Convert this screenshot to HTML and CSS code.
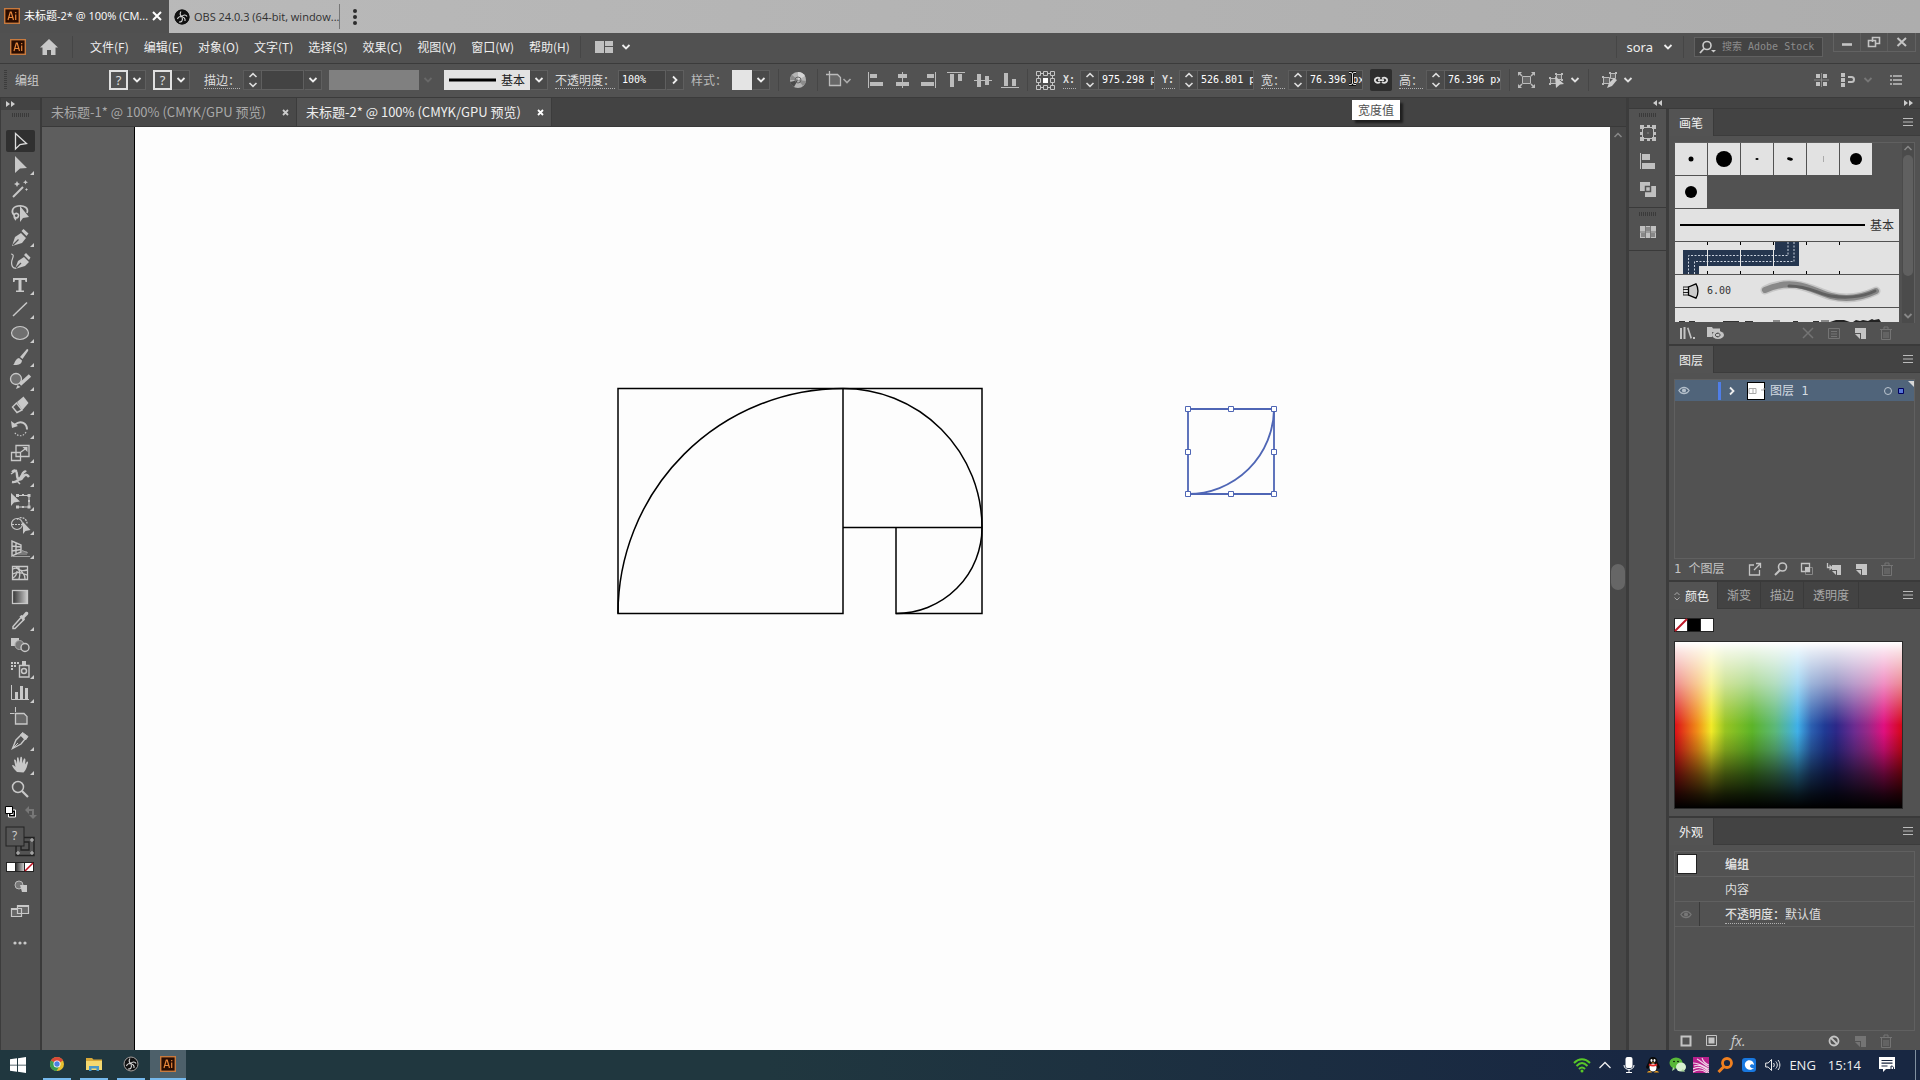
FILE: index.html
```html
<!DOCTYPE html>
<html lang="zh-CN">
<head>
<meta charset="utf-8">
<title>未标题-2* @ 100%</title>
<link rel="stylesheet" href="styles.css">
</head>
<body>
<svg class="defs" aria-hidden="true">
  <symbol id="chev" viewBox="0 0 10 8"><path d="M1.500 2l3.500 3.500L8.500 2" fill="none" stroke="currentColor" stroke-width="1.800"/></symbol>
  <symbol id="step" viewBox="0 0 10 16"><path d="M1.500 5L5 1.700 8.500 5M1.500 11L5 14.300 8.500 11" fill="none" stroke="currentColor" stroke-width="1.600"/></symbol>
  <symbol id="trash" viewBox="0 0 14 14"><path d="M1 3.500h12M5 3V1h4v2M2.500 4v9.500h9V4M5 6v6M7 6v6M9 6v6" fill="none" stroke="currentColor"/></symbol>
  <symbol id="new" viewBox="0 0 14 14"><path d="M2 2h11v11H8V7H2z" fill="currentColor"/><path d="M2 8h5v5z" fill="currentColor"/></symbol>
  <symbol id="menu" viewBox="0 0 12 10"><path d="M1 1.500h10M1 5h10M1 8.500h10" stroke="currentColor"/></symbol>
  <symbol id="ai" viewBox="0 0 16 16"><rect x=".7" y=".7" width="14.600" height="14.600" fill="#2a0c00" stroke="#c87a3e" stroke-width="1.400"/><path d="M4 12L6.300 4h.9l2.300 8M4.800 9.500h4M11.700 6.500V12M11.700 4v1.300" fill="none" stroke="#e8873a" stroke-width="1.200"/></symbol>
  <symbol id="obs" viewBox="0 0 16 16"><circle cx="8" cy="8" r="7.500" fill="#111"/><circle cx="8" cy="8" r="7" fill="none" stroke="currentColor"/><path d="M7 2.500c-1.500 2-1 4 1 5M13 7.500c-1-2-3.500-2-5-.2M5 13c2.500.3 4-1.500 3.200-4M8 8c-2-1-4 0-4.500 2M8 8c2 .2 3.500 1.500 3 4" fill="none" stroke="#ddd" stroke-width="1.100"/></symbol>
  <symbol id="eye" viewBox="0 0 14 10"><path d="M1 5c3-5 9-5 12 0-3 5-9 5-12 0z" fill="none" stroke="currentColor" stroke-width="1.400"/><circle cx="7" cy="5" r="2.400" fill="currentColor"/></symbol>
  <linearGradient id="gGrey"><stop offset="0" stop-color="#333"/><stop offset="1" stop-color="#ccc"/></linearGradient>
</svg>

<header class="windowtabs">
  <div class="wtab wtab-on"><svg width="16" height="16"><use href="#ai"/></svg><span class="wname">未标题-2* @ 100% (CM...</span><button class="x" aria-label="关闭"><svg width="10" height="10"><path d="M1 1l8 8M9 1L1 9" stroke="#fff" stroke-width="2"/></svg></button></div>
  <div class="wtab wtab-off"><svg width="16" height="16"><use href="#obs"/></svg><span class="wname">OBS 24.0.3 (64-bit, window...</span></div>
  <button class="dots" aria-label="更多"><svg width="6" height="18"><g fill="#2c2c2c"><circle cx="3" cy="3" r="2"/><circle cx="3" cy="9" r="2"/><circle cx="3" cy="15" r="2"/></g></svg></button>
</header>

<nav class="menubar">
  <svg width="16" height="16"><use href="#ai"/></svg>
  <button class="home" aria-label="主页"><svg width="18" height="16"><path d="M9 0l9 8.500h-2.500V16h-4.500v-5H7v5H2.500V8.500H0z" fill="#c8c8c8"/></svg></button>
  <i class="vr"></i>
  <div class="menus">
    <button>文件(F)</button><button>编辑(E)</button><button>对象(O)</button><button>文字(T)</button><button>选择(S)</button><button>效果(C)</button><button>视图(V)</button><button>窗口(W)</button><button>帮助(H)</button>
  </div>
  <i class="vr"></i>
  <button class="layoutbtn" aria-label="排列文档"><svg width="18" height="12"><path d="M0 0h9v12H0zM10 0h8v5h-8zM10 6h8v6h-8z" fill="#c0c0c0"/></svg><svg width="10" height="8"><use href="#chev"/></svg></button>
  <div class="menu-right">
    <i class="vr"></i>
    <button class="user">sora <svg width="10" height="8"><use href="#chev"/></svg></button>
    <i class="vr"></i>
    <label class="search"><svg width="18" height="14"><circle cx="8" cy="5.500" r="4" fill="none" stroke="#ccc" stroke-width="1.600"/><path d="M5 8.500L1 13" stroke="#ccc" stroke-width="1.800"/><path d="M12 10h5l-2.500 2.500z" fill="#ccc"/></svg><input type="text" placeholder="搜索 Adobe Stock" aria-label="搜索 Adobe Stock"></label>
    <div class="wincontrols">
      <button aria-label="最小化"><svg width="12" height="12"><path d="M1 8.500h10" stroke="#c4c4c4" stroke-width="2.600"/></svg></button><button aria-label="还原"><svg width="14" height="12"><path d="M5.500 6V1.500h7v6H9M1.500 4.500H8.500v6h-7z" fill="none" stroke="#c4c4c4" stroke-width="1.600"/></svg></button><button aria-label="关闭窗口"><svg width="12" height="12"><path d="M1.500 2l8.500 8M10 2l-8.500 8" stroke="#c4c4c4" stroke-width="2"/></svg></button>
    </div>
  </div>
</nav>

<section class="control">
  <i class="vgrip"></i>
  <span class="kind">编组</span>
  <div class="grp">
    <button class="q" aria-label="填色"><b>?</b><span class="drop"><svg width="10" height="8"><use href="#chev"/></svg></span></button>
    <button class="q" aria-label="描边颜色"><b>?</b><span class="drop"><svg width="10" height="8"><use href="#chev"/></svg></span></button>
  </div>
  <div class="grp">
    <label class="dotted" for="sw">描边：</label>
    <span class="combo"><button class="stepper" aria-label="微调"><svg width="10" height="16"><use href="#step"/></svg></button><input id="sw" class="w43" type="text"><button class="drop" aria-label="粗细"><svg width="10" height="8"><use href="#chev"/></svg></button></span>
    <span class="combo flat"><i class="greybox"></i><span class="drop dim"><svg width="10" height="8"><use href="#chev"/></svg></span></span>
    <button class="combo basic"><span><svg width="48" height="4"><path d="M0 2h47" stroke="#000" stroke-width="3"/></svg>基本</span><span class="drop"><svg width="10" height="8"><use href="#chev"/></svg></span></button>
    <label class="dotted" for="op">不透明度：</label>
    <span class="combo"><input id="op" class="w48" type="text" value="100%"><button class="drop" aria-label="不透明度滑块"><svg width="8" height="10"><path d="M2 1.500L5.500 5 2 8.500" fill="none" stroke="#eee" stroke-width="1.800"/></svg></button></span>
    <span class="plain">样式：</span>
    <button class="combo" aria-label="图形样式"><i class="style-sw"></i><span class="drop"><svg width="10" height="8"><use href="#chev"/></svg></span></button>
  </div>
  <i class="vr"></i>
  <button class="ic wide" aria-label="重新着色"><svg width="18" height="18"><circle cx="9" cy="9" r="8" fill="#b4b4b4"/><path d="M9 9L9 1a8 8 0 0 1 7 4z" fill="#d4d4d4"/><path d="M9 9l8 1a8 8 0 0 1-3 5z" fill="#8c8c8c"/><path d="M9 9l-8 2a8 8 0 0 0 4 5z" fill="#4a4a4a"/><path d="M9 9l-6-5a8 8 0 0 0-2 5z" fill="#8a8a8a"/><circle cx="9" cy="9" r="3" fill="none" stroke="#666"/></svg></button>
  <i class="vr"></i>
  <button class="ic" aria-label="画板"><svg width="26" height="18"><path d="M3.500 0v3M0 3.500h3M3.500 3.500h8l3 3v8h-11z" fill="#686868" stroke="#bbb" stroke-width="1.300"/><path d="M17.500 8l3.500 3.500L24.500 8" fill="none" stroke="#aaa" stroke-width="1.600"/></svg></button>
  <div class="grp aligns">
    <button class="ic" aria-label="左对齐"><svg width="18" height="18"><path d="M2.500 1v16" stroke="#bbb"/><path d="M4 3h7v4H4zM4 11h13v4H4z" fill="#bbb"/></svg></button>
    <button class="ic" aria-label="水平居中"><svg width="18" height="18"><path d="M9.500 1v16" stroke="#bbb"/><path d="M5 3h9v4H5zM3 11h13v4H3z" fill="#bbb"/></svg></button>
    <button class="ic" aria-label="右对齐"><svg width="18" height="18"><path d="M15.500 1v16" stroke="#bbb"/><path d="M7 3h7v4H7zM1 11h13v4H1z" fill="#bbb"/></svg></button>
    <button class="ic" aria-label="顶对齐"><svg width="18" height="18"><path d="M0 1.500h18" stroke="#bbb"/><path d="M3 3h4v13H3zM11 3h4v7h-4z" fill="#bbb"/></svg></button>
    <button class="ic" aria-label="垂直居中"><svg width="18" height="18"><path d="M0 9.500h18" stroke="#bbb"/><path d="M3 3h4v13H3zM11 5h4v9h-4z" fill="#bbb"/></svg></button>
    <button class="ic" aria-label="底对齐"><svg width="18" height="18"><path d="M0 16.500h18" stroke="#bbb"/><path d="M3 2h4v13H3zM11 8h4v7h-4z" fill="#bbb"/></svg></button>
  </div>
  <i class="vr"></i>
  <button class="ic" aria-label="参考点"><svg width="19" height="19"><g fill="none" stroke="#c4c4c4"><path d="M5 2.500h2M12 2.500h2M5 16.500h2M12 16.500h2M2.500 5v2M2.500 12v2M16.500 5v2M16.500 12v2"/><path d="M.5.5h4v4h-4zM7.500.5h4v4h-4zM14.500.5h4v4h-4zM.5 7.500h4v4h-4zM14.500 7.500h4v4h-4zM.5 14.500h4v4h-4zM7.500 14.500h4v4h-4zM14.500 14.500h4v4h-4z"/></g><path d="M7 7h5v5H7z" fill="#fff"/></svg></button>
  <div class="grp xy">
    <label class="dotted mono" for="fx">X:</label>
    <span class="combo"><button class="stepper" aria-label="X 微调"><svg width="10" height="16"><use href="#step"/></svg></button><input id="fx" class="w57" type="text" value="975.298 px"></span>
    <label class="dotted mono" for="fy">Y:</label>
    <span class="combo"><button class="stepper" aria-label="Y 微调"><svg width="10" height="16"><use href="#step"/></svg></button><input id="fy" class="w57" type="text" value="526.801 px"></span>
    <label class="dotted" for="fw">宽：</label>
    <span class="combo tiphost"><button class="stepper" aria-label="宽 微调"><svg width="10" height="16"><use href="#step"/></svg></button><input id="fw" class="w57" type="text" value="76.396 px"><svg class="ibeam" width="9" height="15"><path d="M1 1.500h2.500L4.500 3l1-1.500H8M4.500 3v9M1 13.500h2.500l1-1.500 1 1.500H8" fill="none" stroke="#111" stroke-width="3"/><path d="M1 1.500h2.500L4.500 3l1-1.500H8M4.500 3v9M1 13.500h2.500l1-1.500 1 1.500H8" fill="none" stroke="#ddd"/></svg><span class="tip" role="tooltip">宽度值</span></span>
    <button class="link" aria-label="约束宽度和高度比例"><svg width="16" height="10"><path d="M7 3.500a3 2.500 0 1 0 0 3.500M9 3.500a3 2.500 0 1 1 0 3.500M5 5.200h6" fill="none" stroke="#e0e0e0" stroke-width="1.800"/></svg></button>
    <label class="dotted" for="fh">高：</label>
    <span class="combo"><button class="stepper" aria-label="高 微调"><svg width="10" height="16"><use href="#step"/></svg></button><input id="fh" class="w57" type="text" value="76.396 px"></span>
  </div>
  <i class="vr"></i>
  <button class="ic" aria-label="隔离选中的组"><svg width="18" height="16"><path d="M4.500 4.500h8v7h-8z" fill="#686868" stroke="#bbb"/><path d="M1 1l3 3M16 1l-3 3M1 15l3-3M16 15l-3-3" stroke="#bbb" stroke-width="1.500"/><path d="M0 4V0h4zM17 4V0h-4zM0 12v4h4zM17 12v4h-4z" fill="#bbb"/></svg></button>
  <button class="ic icd" aria-label="选择类似对象"><svg width="18" height="18"><path d="M2.500 7.500h6v5h-6zM8.500 3.500h5v5h-5z" fill="#686868" stroke="#bbb"/><path d="M1 6h2v2H1zM1 12h2v2H1zM7 2h2v2H7zM13 2h2v2h-2zM13 8h2v2h-2z" fill="#bbb"/><path d="M7 5l9 8-4 .5L8 17z" fill="#ccc"/></svg><svg width="10" height="8"><use href="#chev"/></svg></button>
  <i class="vr"></i>
  <button class="ic icd" aria-label="编辑选中对象"><svg width="18" height="18"><path d="M2.500 6.500h6v6h-6zM9.500 2.500h5v5h-5z" fill="#686868" stroke="#bbb"/><path d="M1 5h2v2H1zM1 12h2v2H1zM8 1h2v2H8zM14 1h2v2h-2z" fill="#bbb"/><path d="M6 17l2-5 5-5 3 2-5 6z" fill="#ccc"/></svg><svg width="10" height="8"><use href="#chev"/></svg></button>
  <div class="control-right">
    <button class="ic" aria-label="对齐网格"><svg width="15" height="14"><path d="M2 1h4v4H2zM9 1h4v4H9zM2 9h4v4H2zM9 9h4v4H9z" fill="#c0c0c0"/><path d="M7.500 0v14M0 7h15" stroke="#888"/></svg></button>
    <button class="ic icd dimchev" aria-label="对齐像素"><svg width="16" height="14"><path d="M0 0h4v4H0zM0 5h4v4H0zM0 10h4v4H0z" fill="#c0c0c0"/><path d="M7 4h3.500a2.500 2.500 0 0 1 0 5H7" fill="none" stroke="#c0c0c0" stroke-width="2"/></svg><svg width="10" height="8"><use href="#chev"/></svg></button>
    <button class="ic" aria-label="控制栏菜单"><svg width="14" height="12"><path d="M1 2h2M1 6h2M1 10h2M4 2h9M4 6h9M4 10h9" stroke="#c0c0c0" stroke-width="1.500"/></svg></button>
  </div>
</section>

<main class="work">
  <aside class="tools">
    <button class="collapse" aria-label="展开"><svg width="9" height="6"><path d="M0 0l4 3-4 3zM5 0l4 3-4 3z" fill="#ccc"/></svg></button>
    <i class="grip"></i>
    <div class="toollist">
      <button class="on" aria-label="选择"><svg width="28" height="24"><path d="M7.500 4.500V20L12 15.500l6.500-1z" fill="none" stroke="#ddd" stroke-width="1.300"/></svg></button>
      <button class="f" aria-label="直接选择"><svg width="28" height="24"><path d="M7 3v17l5-4.500 7-.5z" fill="#c8c8c8"/></svg></button>
      <button aria-label="魔棒"><svg width="28" height="24"><path d="M5 20L15 10" stroke="#c8c8c8" stroke-width="2"/><path d="M9 4l1 2 2 1-2 1-1 2-1-2-2-1 2-1zM17.500 3l.8 1.500 1.700.7-1.700.7-.8 1.600-.8-1.600-1.700-.7 1.700-.7zM18.500 11l.6 1 1 .5-1 .5-.6 1-.6-1-1-.5 1-.5z" fill="#c8c8c8"/></svg></button>
      <button aria-label="套索"><svg width="28" height="24"><path d="M6 14c-3-3-2-8 4-9 6-1 11 2 9 7M6 14c2-3 6-1 4 2-1 1.500-4 1-4-2 0 3 .5 4 2 5" fill="none" stroke="#c8c8c8" stroke-width="1.700"/><path d="M12 5v16l3-4 6-1z" fill="#c8c8c8"/></svg></button>
      <button class="f" aria-label="钢笔"><svg width="28" height="24"><path d="M4 21L7 12l6-4 5 5-4 5zM13.500 6l2-2 5 4.500-2 2.500z" fill="#c8c8c8"/><path d="M5 20l5.500-5.500" stroke="#535353" stroke-width="1.200"/></svg></button>
      <button aria-label="曲率"><svg width="28" height="24"><path d="M3 5c4 0 1.500 4 .8 7-.8 4 1 8 4 7" fill="none" stroke="#c8c8c8" stroke-width="1.200"/><path d="M7 20l3-8 6-4 5 5-4 4zM16 6l2-2 4.500 4.500-1.500 2.500z" fill="#c8c8c8"/><path d="M8 19l5-5" stroke="#535353" stroke-width="1.200"/></svg></button>
      <button class="f" aria-label="文字"><svg width="28" height="24"><path d="M5 5h14v4h-1.500L17 7h-3.500v10.500H16V19H8v-1.500h2.500V7H7l-.5 2H5z" fill="#c8c8c8"/></svg></button>
      <button class="f" aria-label="直线段"><svg width="28" height="24"><path d="M5 19L19 5.500" stroke="#c8c8c8" stroke-width="1.500"/></svg></button>
      <button class="f" aria-label="椭圆"><svg width="28" height="24"><ellipse cx="12" cy="12" rx="8.500" ry="6.500" fill="#707070" stroke="#c8c8c8" stroke-width="1.200"/></svg></button>
      <button class="f" aria-label="画笔"><svg width="28" height="24"><path d="M12 12l7-8c1.500 0 1.500 1 1 2l-5.500 8zM11 13l3 2.500c-.5 4-4 5-9 4.500 2-1 1.500-6 6-7z" fill="#c8c8c8"/></svg></button>
      <button class="f" aria-label="Shaper"><svg width="28" height="24"><circle cx="8" cy="10" r="5.500" fill="#707070" stroke="#c8c8c8" stroke-width="1.300"/><path d="M12 15.500l10-9" stroke="#c8c8c8" stroke-width="3.500"/><path d="M8 20l1.500-4 3 2z" fill="#c8c8c8"/></svg></button>
      <button class="f" aria-label="橡皮擦"><svg width="28" height="24"><path d="M9 9l6.500-5.500L20.500 10l-6 7z" fill="#c8c8c8"/><path d="M8.500 10l-4 4 4.500 5.500 5-2.500z" fill="none" stroke="#c8c8c8" stroke-width="1.400"/></svg></button>
      <button class="f" aria-label="旋转"><svg width="28" height="24"><path d="M7 7.500c6-5 12-1 12 5" fill="none" stroke="#c8c8c8" stroke-width="2"/><path d="M3 4l1 7 6-2z" fill="#c8c8c8"/><path d="M18 15c-3 5-8 5-12 0" fill="none" stroke="#c8c8c8" stroke-width="1.200" stroke-dasharray="1.500 1.500"/></svg></button>
      <button class="f" aria-label="比例缩放"><svg width="28" height="24"><path d="M8 4.500h13v11H8zM3.500 11.500h9v8h-9z" fill="none" stroke="#c8c8c8" stroke-width="1.300"/><path d="M13 11l4-3" stroke="#c8c8c8" stroke-width="1.400"/><path d="M14.500 6h5v5z" fill="#c8c8c8"/></svg></button>
      <button class="f" aria-label="宽度"><svg width="28" height="24"><path d="M4 7c3-3 5-1 5 3 0 5 4 6 6 2 2-3 4-3 6 0M4 17c5 1 8-3 10-7 1-3 3-4 4-3" fill="none" stroke="#c8c8c8" stroke-width="2.400"/><path d="M3 9l6-4M8 15l4 4" stroke="#c8c8c8" stroke-width="1.500"/></svg></button>
      <button class="f" aria-label="自由变换"><svg width="28" height="24"><path d="M9.500 6.500h11.500v11.500h-12" fill="none" stroke="#c8c8c8" stroke-width="1.200"/><path d="M3 4v13l3-3.500 6-1zM8 5h3v3H8zM19.500 5h3v3h-3zM19.500 16.500h3v3h-3zM8 16.500h3v3H8zM14 5h2v2h-2zM14 17h2v2h-2zM20 11h2v2h-2z" fill="#c8c8c8"/></svg></button>
      <button class="f" aria-label="形状生成器"><svg width="28" height="24"><circle cx="9" cy="11" r="5.500" fill="none" stroke="#c8c8c8" stroke-width="1.200"/><path d="M9 6.500c4-4 10-1 10 4M4 11.500h11" fill="none" stroke="#c8c8c8" stroke-width="1.200" stroke-dasharray="2 1"/><path d="M15 9v12l2.500-3 5-1z" fill="#c8c8c8"/></svg></button>
      <button class="f" aria-label="透视网格"><svg width="28" height="24"><path d="M4 4v15l9-4V8zM4 9l9 1M4 14l9-1.500M8 6v11" fill="none" stroke="#c8c8c8" stroke-width="1.400"/><path d="M13 15h6M10 17h9M5 19.500h17M13 13l7 3" stroke="#a0a0a0"/></svg></button>
      <button aria-label="网格"><svg width="28" height="24"><path d="M4.500 5.500h15v13h-15zM5 8c6-3 8 3 6 10M11 6c-1 4 4 4 8 3M5 13c5-3 9-1 14 1M8 6c5 3 9 7 9 12M5 17c3-2 4-4 4-7" fill="none" stroke="#c8c8c8" stroke-width="1.300"/></svg></button>
      <button aria-label="渐变"><svg width="28" height="24"><rect x="4.500" y="5.500" width="15" height="13" fill="url(#gGrey)" stroke="#c8c8c8" stroke-width="1.300"/></svg></button>
      <button class="f" aria-label="吸管"><svg width="28" height="24"><path d="M13 8.500L5 17.500v2h2l8.500-8.500" fill="none" stroke="#c8c8c8" stroke-width="1.500"/><path d="M11.500 7.500l2-1.500 1 .5 3-3.500c2-1 3.500.5 2.500 2.500L16.500 9l.5 1.500-1.500 1.800z" fill="#c8c8c8"/></svg></button>
      <button aria-label="混合"><svg width="28" height="24"><path d="M3 5h8v8H3z" fill="#c8c8c8"/><circle cx="11.500" cy="12" r="4.500" fill="#777" stroke="#aaa"/><circle cx="17" cy="14.500" r="4" fill="#535353" stroke="#c8c8c8" stroke-width="1.400"/></svg></button>
      <button class="f" aria-label="符号喷枪"><svg width="28" height="24"><path d="M11.500 8.500h9.500v11.500h-9.500z" fill="none" stroke="#c8c8c8" stroke-width="1.400"/><path d="M14 4h4v4h-4zM3 5h2v2H3zM6 5h2v2H6zM9 5h2v2H9zM3 8h2v2H3zM6 8h2v2H6zM3 11h2v2H3z" fill="#c8c8c8"/><circle cx="16" cy="14" r="2.500" fill="none" stroke="#c8c8c8" stroke-width="1.500"/></svg></button>
      <button class="f" aria-label="柱形图"><svg width="28" height="24"><path d="M3.500 4v14.500H21" fill="none" stroke="#c8c8c8"/><path d="M7 11h3v7H7zM12 5h3v13h-3zM17 7h3v11h-3z" fill="#c8c8c8"/></svg></button>
      <button aria-label="画板工具"><svg width="28" height="24"><path d="M7.500 8.500h8.500l3 3V19H7.500z" fill="#686868" stroke="#c8c8c8" stroke-width="1.300"/><path d="M7.500 2v5M2 8.500h4.500" stroke="#c8c8c8"/></svg></button>
      <button class="f" aria-label="切片"><svg width="28" height="24"><path d="M4.500 19.500L8 11l5-5 4 4-4 5z" fill="none" stroke="#c8c8c8" stroke-width="1.400"/><path d="M12.500 6l2-2.500 5.500 4L17.500 11zM5 19l5-5z" fill="#c8c8c8" stroke="#c8c8c8"/></svg></button>
      <button class="f" aria-label="抓手"><svg width="28" height="24"><path d="M9 19c-2-2-4-4-5-6.500.5-1.200 2-.5 3.500 1.500L6 7c1-1 2-.5 3 4V5c1-1.300 2-1 2.200 5L12.500 4c1.500-.8 2 0 1.500 6.500l2-5c1.500-.5 1.800.5 1 6l2-3c1.300 0 1.200 1 .5 3-1 4-2 6-4 8z" fill="#c8c8c8"/></svg></button>
      <button aria-label="缩放"><svg width="28" height="24"><circle cx="10" cy="10" r="5.500" fill="none" stroke="#c8c8c8" stroke-width="1.500"/><path d="M14 14l6 6" stroke="#c8c8c8" stroke-width="2.200"/></svg></button>
    </div>
    <button class="block swap" aria-label="默认和互换"><svg width="34" height="24"><path d="M4.500 8h7v7h-7z" fill="#000" stroke="#fff"/><path d="M6.500 10h3v3h-3z" fill="#fff"/><path d="M1.500 4.500h7v7h-7z" fill="#fff" stroke="#000"/><path d="M24 8h5v7" fill="none" stroke="#777" stroke-width="2"/><path d="M25 4v8l-4-4zM25 13h8l-4 4z" fill="#777"/></svg></button>
    <button class="block fillstroke" aria-label="填色和描边"><svg width="34" height="32"><path d="M11 11.500h18v18h-18zM16 16h8v8h-8z" fill="#535353" stroke="#222" stroke-width="1.400"/><g fill="none" stroke="#ccc"><circle cx="27" cy="14" r="1.200"/><circle cx="27" cy="27" r="1.200"/><circle cx="13" cy="27" r="1.200"/></g><rect x="1" y="1" width="18" height="19" fill="#555" stroke="#222"/></svg><b>?</b></button>
    <button class="block modes" aria-label="颜色模式"><svg width="28" height="10"><rect width="28" height="10" fill="#222"/><path d="M1 1h8v8H1z" fill="#fff"/><path d="M10 1h8v8h-8z" fill="url(#gGrey)"/><path d="M19 1h8v8h-8z" fill="#fff"/><path d="M19 9l8-8" stroke="#c01020" stroke-width="1.600"/></svg></button>
    <button class="block" aria-label="绘图模式"><svg width="28" height="25"><circle cx="11" cy="11" r="4" fill="#777" stroke="#bbb"/><path d="M12 11h7v7h-5z" fill="#c8c8c8"/></svg></button>
    <button class="block" aria-label="屏幕模式"><svg width="28" height="24"><path d="M3.500 9.500h10v8h-10zM9.500 6.500h11v8h-11z" fill="#686868" stroke="#c8c8c8" stroke-width="1.200"/><path d="M3 9h6v2H3zM9 6h12v2H9z" fill="#c8c8c8"/></svg></button>
    <button class="block more" aria-label="编辑工具栏"><svg width="28" height="24"><g fill="#c8c8c8"><circle cx="7" cy="12" r="1.600"/><circle cx="12" cy="12" r="1.600"/><circle cx="17" cy="12" r="1.600"/></g></svg></button>
  </aside>

  <section class="doc">
    <div class="doctabs">
      <div class="dtab"><span>未标题-1* @ 100% (CMYK/GPU 预览)</span><button class="x" aria-label="关闭"><svg width="7" height="7"><path d="M1 1l5 5M6 1L1 6" stroke="#ccc" stroke-width="1.800"/></svg></button></div>
      <div class="dtab dtab-on"><span>未标题-2* @ 100% (CMYK/GPU 预览)</span><button class="x" aria-label="关闭"><svg width="7" height="7"><path d="M1 1l5 5M6 1L1 6" stroke="#fff" stroke-width="1.800"/></svg></button></div>
    </div>
    <div class="stage">
      <div class="artboard">
        <svg class="art" role="img" aria-label="黄金螺旋">
          <g fill="none" stroke="#000" stroke-width="1.500">
            <path d="M708 261.500H483v225h225zM708 261.500h139v225h-86v-86M708 400.500h139"/>
            <path d="M483 486.500a225 225 0 0 1 225-225a139 139 0 0 1 139 139a86 86 0 0 1-86 86"/>
          </g>
          <g fill="none" stroke="#4f66b5">
            <path d="M1053 282h86v85h-86z" stroke-width="1.800"/>
            <path d="M1139 282a86 86 0 0 1-86 85" stroke-width="1.800"/>
            <g fill="#fff" stroke-width="1">
              <path d="M1050.500 279.500h5v5h-5zM1093.500 279.500h5v5h-5zM1136.500 279.500h5v5h-5zM1050.500 322.500h5v5h-5zM1136.500 322.500h5v5h-5zM1050.500 364.500h5v5h-5zM1093.500 364.500h5v5h-5zM1136.500 364.500h5v5h-5z"/>
            </g>
          </g>
        </svg>
      </div>
      <div class="vscroll"><svg width="10" height="8"><path d="M1.500 6L5 2.500 8.500 6" fill="none" stroke="#888" stroke-width="1.500"/></svg><i class="thumb"></i></div>
    </div>
  </section>

  <aside class="right">
    <div class="righthead"><button aria-label="展开停靠栏"><svg width="9" height="6"><path d="M4 0L0 3l4 3zM9 0L5 3l4 3z" fill="#ccc"/></svg></button><button aria-label="折叠面板"><svg width="9" height="6"><path d="M0 0l4 3-4 3zM5 0l4 3-4 3z" fill="#ccc"/></svg></button></div>
    <div class="rightbody">
      <div class="dock">
        <div class="dockgrp">
          <i class="grip"></i>
          <button aria-label="变换"><svg width="18" height="18"><path d="M3.500 3.500h11v11h-11z" fill="none" stroke="#c0c0c0"/><path d="M1 1h4v4H1zM13 1h4v4h-4zM1 13h4v4H1zM13 13h4v4h-4zM8 1h3v3H8zM8 14h3v3H8zM1 8h3v3H1zM14 8h3v3h-3zM8.500 8.500h1v1h-1z" fill="#c0c0c0"/></svg></button>
          <button aria-label="对齐"><svg width="18" height="18"><path d="M1.500 1v16" stroke="#c0c0c0"/><path d="M3 2h8v6H3zM3 11h13v6H3z" fill="#c0c0c0"/></svg></button>
          <button aria-label="路径查找器"><svg width="18" height="18"><path d="M1 2h10v4h6v11H6v-6H1z" fill="#c0c0c0"/><path d="M6.500 6.500h5v5h-5z" fill="none" stroke="#535353" stroke-width="1.500"/></svg></button>
        </div>
        <div class="dockgrp">
          <i class="grip"></i>
          <button aria-label="色板"><svg width="18" height="14"><path d="M1 1h16v12H1z" fill="#c0c0c0"/><path d="M7 2h4v4H7zM2 8h4v4H2zM12 8h4v4h-4z" fill="#888"/><path d="M1 7h16M6.500 1v12M11.500 1v12" stroke="#777"/></svg></button>
        </div>
      </div>
      <div class="panels">
        <section class="panel">
          <header class="ptabs"><button class="ptab on">画笔</button><button class="pmenu" aria-label="面板菜单"><svg width="12" height="10"><use href="#menu"/></svg></button></header>
          <div class="pbox brushes">
            <div class="brushlist">
              <div class="cells">
                <i><svg width="32" height="32"><circle cx="16" cy="16" r="2.500"/></svg></i><i><svg width="32" height="32"><circle cx="16" cy="16" r="8"/></svg></i><i><svg width="32" height="32"><ellipse cx="16" cy="16" rx="1.600" ry="1"/></svg></i><i><svg width="32" height="32"><ellipse cx="16" cy="16" rx="3" ry="1.500" transform="rotate(12 16 16)"/></svg></i><i><svg width="32" height="32"><path d="M16.500 13v6" stroke="#aaa"/></svg></i><i><svg width="32" height="32"><circle cx="16" cy="16" r="6"/></svg></i><i><svg width="32" height="32"><circle cx="16" cy="16" r="6"/></svg></i>
              </div>
              <div class="brow basicrow"><svg width="185" height="4"><path d="M0 2h185" stroke="#000" stroke-width="2"/></svg>基本</div>
              <div class="brow"><svg width="224" height="32"><path d="M16 32V16h92V0" fill="none" stroke="#25364f" stroke-width="16"/><path d="M107 0h17v24H98V8h9z" fill="#25364f"/><path d="M13.500 32V13.500H113V0M19.500 32V19.500H119V0" fill="none" stroke="#c9d0dc" stroke-dasharray="2 1.500"/><path d="M32.500 7v18M65.500 7v18M98.500 7v18" stroke="#e8e8e8"/><path d="M32.500 0v3M65.500 0v3M98.500 0v3M131.500 0v3M164.500 0v3M32.500 29v3M65.500 29v3M98.500 29v3M131.500 29v3M164.500 29v3" stroke="#000"/></svg></div>
              <div class="brow sizerow"><svg width="16" height="16"><path d="M0 4h6M0 4v8h6M0 6.500h5M0 9.500h5" fill="none" stroke="#222"/><path d="M5.500 4L13 .8c2.600 4 2.600 10.400 0 14.400L5.500 12z" fill="#ccc" stroke="#000" stroke-width="1.300"/></svg><span>6.00</span><svg width="124" height="26"><g fill="none" stroke-linecap="round"><path d="M6 12c30-14 50 2 66 6s30 2 45-5" stroke="#aaa" stroke-width="9" opacity=".5"/><path d="M6 12c30-14 50 2 66 6s30 2 45-5" stroke="#888" stroke-width="6"/><path d="M30 8c20 0 30 8 42 10s30 2 44-5" stroke="#606060" stroke-width="3"/></g></svg></div>
              <div class="brow cut"><svg width="224" height="14"><path d="M4 13.500h6M14 13.500h6M48 13.500h16M70 13.500h8M98 13h7M118 13.500h5M138 13.500h6M146 13h8" stroke="#333"/><path d="M155 14l6-2h8l6 2zM178 14l3-2 4 1 3-1 5 1 4-2 2 1 5-1 2 3z" fill="#222"/></svg></div>
            </div>
            <div class="pscroll"><svg width="10" height="8"><path d="M1.500 6L5 2.500 8.500 6" fill="none" stroke="#888" stroke-width="1.500"/></svg><i></i><svg width="10" height="8"><use href="#chev"/></svg></div>
          </div>
          <footer class="pfoot icons"><button aria-label="画笔库菜单"><svg width="16" height="14"><path d="M1 2h2v11H1zM4.500 1h2v12h-2zM8 2l1.500-.5L13 12l-1.500.8z" fill="#c4c4c4"/><path d="M14 11h2v2h-2z" fill="#c4c4c4"/></svg></button><button aria-label="库面板"><svg width="18" height="14"><path d="M0 1h5l1 1.500h7V6H5v5H0z" fill="#c4c4c4"/><ellipse cx="11" cy="9" rx="6" ry="4" fill="#c4c4c4"/><path d="M11.500 7.500a2 1.800 0 1 0 0 3M10 7.500a2 1.800 0 1 1 0 3" stroke="#535353" fill="none"/></svg></button><span class="sp"></span><button class="off" aria-label="移去描边"><svg width="14" height="14"><path d="M2 2l10 10M12 2L2 12" stroke="currentColor" stroke-width="1.500"/></svg></button><button class="off" aria-label="选项"><svg width="14" height="14"><path d="M1.500 2.500h11v10h-11zM4 5.500h6M4 8h6M4 10.500h6" fill="none" stroke="currentColor"/></svg></button><button aria-label="新建画笔"><svg width="14" height="14"><use href="#new"/></svg></button><button class="off" aria-label="删除画笔"><svg width="14" height="14"><use href="#trash"/></svg></button></footer>
        </section>

        <section class="panel">
          <header class="ptabs"><button class="ptab on">图层</button><button class="pmenu" aria-label="面板菜单"><svg width="12" height="10"><use href="#menu"/></svg></button></header>
          <div class="pbox">
            <div class="layer"><svg class="leye" width="12" height="9"><use href="#eye"/></svg><i class="lcolor"></i><svg width="8" height="10"><path d="M2 1.500L5.500 5 2 8.500" fill="none" stroke="#eee" stroke-width="1.800"/></svg><svg width="18" height="18"><rect x=".5" y=".5" width="17" height="17" fill="#fff" stroke="#000"/><path d="M2 6.500h7v5H2zM6 6v5M14 8h3v-2" fill="none" stroke="#aaa"/></svg><span class="mono">图层 1</span><svg class="ltarget" width="32" height="20"><circle cx="6" cy="10" r="3.500" fill="none" stroke="#bcc6d0"/><path d="M16.500 7.500h5v5h-5z" fill="#5878d8" stroke="#000060"/><path d="M26 0h6v6z" fill="#d8d8d8"/></svg></div>
          </div>
          <footer class="pfoot"><span class="mono">1 个图层</span><span class="sp"></span><button aria-label="导出"><svg width="14" height="14"><path d="M6 3H1.500v10h10V8M6 8l6-6M8 1.500h4.500V6" fill="none" stroke="#c4c4c4" stroke-width="1.300"/></svg></button><button aria-label="定位对象"><svg width="14" height="14"><circle cx="8.500" cy="5" r="4" fill="none" stroke="#c4c4c4" stroke-width="1.600"/><path d="M6 8l-5 5" stroke="#c4c4c4" stroke-width="2"/></svg></button><button aria-label="剪切蒙版"><svg width="14" height="14"><path d="M5.500 5.500h7v7h-7z" fill="none" stroke="#888"/><path d="M1.500 1.500h8v8h-8z" fill="none" stroke="#c4c4c4" stroke-width="1.300"/><path d="M5 5h5v5H5z" fill="#c4c4c4"/></svg></button><button aria-label="新建子图层"><svg width="16" height="14"><path d="M6 3h9v10h-4V8H6z" fill="#c4c4c4"/><path d="M1.500 1v4.500H5" fill="none" stroke="#c4c4c4" stroke-width="1.300"/><path d="M3.500 2.500L7 5.500 3.500 8.500zM6 9h4v4z" fill="#c4c4c4"/></svg></button><button aria-label="新建图层"><svg width="14" height="14"><use href="#new"/></svg></button><button class="off" aria-label="删除图层"><svg width="14" height="14"><use href="#trash"/></svg></button></footer>
        </section>

        <section class="panel">
          <header class="ptabs multi"><button class="ptab on"><svg width="6" height="10"><path d="M.5 4L3 1.500 5.500 4M.5 6.500L3 9 5.500 6.500" fill="none" stroke="#aaa"/></svg>颜色</button><button class="ptab">渐变</button><button class="ptab">描边</button><button class="ptab">透明度</button><button class="pmenu" aria-label="面板菜单"><svg width="12" height="10"><use href="#menu"/></svg></button></header>
          <div class="colorbody">
            <svg width="40" height="14"><rect width="40" height="14" fill="#222"/><path d="M1 1h12v12H1zM27 1h12v12H27z" fill="#fff"/><path d="M14 1h12v12H14z" fill="#000"/><path d="M1 13L13 1" stroke="#c01828" stroke-width="2"/></svg>
            <div class="spectrum"></div>
          </div>
        </section>

        <section class="panel last">
          <header class="ptabs"><button class="ptab on">外观</button><button class="pmenu" aria-label="面板菜单"><svg width="12" height="10"><use href="#menu"/></svg></button></header>
          <div class="pbox">
            <ul class="appear">
              <li><span class="acol"><i class="asw"></i></span><b>编组</b></li>
              <li><span class="acol"></span>内容</li>
              <li><span class="acol aeye"><svg width="12" height="9"><use href="#eye"/></svg></span><a href="#" class="dotted">不透明度：</a>默认值</li>
            </ul>
          </div>
          <footer class="pfoot icons"><button aria-label="添加描边"><svg width="14" height="14"><path d="M2.500 2.500h9v9h-9z" fill="none" stroke="#c4c4c4" stroke-width="2"/></svg></button><button aria-label="添加填色"><svg width="14" height="14"><path d="M1.500 1.500h10v10h-10z" fill="none" stroke="#c4c4c4"/><path d="M3.500 3.500h6v6h-6z" fill="#c4c4c4"/></svg></button><button class="fx" aria-label="添加效果"><em>fx.</em></button><span class="sp"></span><button aria-label="清除外观"><svg width="14" height="14"><circle cx="7" cy="7" r="4.500" fill="none" stroke="#c4c4c4" stroke-width="1.800"/><path d="M4 4l6 6" stroke="#c4c4c4" stroke-width="1.800"/></svg></button><button class="off" aria-label="复制"><svg width="14" height="14"><use href="#new"/></svg></button><button class="off" aria-label="删除"><svg width="14" height="14"><use href="#trash"/></svg></button></footer>
        </section>
      </div>
    </div>
  </aside>
</main>

<footer class="taskbar">
  <button class="start" aria-label="开始"><svg width="16" height="16"><path d="M0 2.300l7-1v6.400H0zM8 1.200L16 0v7.700H8zM0 8.500h7v6.300l-7-1zM8 8.500h8V16l-8-1.200z" fill="#fff"/></svg></button>
  <button class="app" aria-label="Chrome"><svg width="16" height="16"><circle cx="8" cy="8" r="7" fill="#e8c030"/><path d="M8 8L1.900 4.500A7 7 0 0 1 14.100 4.500z" fill="#d84838"/><path d="M8 8L1.900 4.500A7 7 0 0 0 7.500 15l3-5z" fill="#3a9c50"/><circle cx="8" cy="8" r="3.500" fill="#fff"/><circle cx="8" cy="8" r="2.700" fill="#4a80e0"/></svg></button>
  <button class="app" aria-label="文件资源管理器"><svg width="16" height="16"><path d="M0 2h6l1.500 1.500H16V14H0z" fill="#d8a838"/><path d="M0 5h16v9H0z" fill="#f4d870"/><path d="M3 15v-5h10v5h-2.500v-2.500h-5V15z" fill="#4a98c8"/></svg></button>
  <button class="app obsapp" aria-label="OBS"><svg width="16" height="16"><use href="#obs"/></svg></button>
  <button class="app cur" aria-label="Illustrator"><svg width="16" height="16"><use href="#ai"/></svg></button>
  <div class="tray">
    <button aria-label="网络"><svg width="18" height="16"><g fill="none" stroke="#58c828" stroke-width="2"><path d="M1 6c5-5 11-5 16 0M3.500 9c4-4 7-4 11 0M6 12c2-2 4-2 6 0"/></g><circle cx="9" cy="14" r="1.500" fill="#58c828"/></svg></button>
    <button aria-label="显示隐藏的图标"><svg width="14" height="10"><path d="M1.500 8L7 2.500 12.500 8" fill="none" stroke="#eee" stroke-width="1.300"/></svg></button>
    <button aria-label="麦克风"><svg width="12" height="16"><rect x="2.500" y="0" width="7" height="11" rx="2" fill="#fff"/><path d="M1 8c0 6 10 6 10 0M6 13v2.500M3 15.500h6" fill="none" stroke="#fff"/></svg></button>
    <button aria-label="QQ"><svg width="16" height="16"><path d="M8 0c3 0 4.500 2 4.500 5L15 10l-1 2-1.500-1c0 2-2 4-4.500 4s-4.500-2-4.500-4L2 12l-1-2 2.500-5C3.500 2 5 0 8 0z" fill="#0a0a0a"/><ellipse cx="8" cy="10.500" rx="3.500" ry="4" fill="#fff"/><path d="M4 6.500c3 1.500 5 1.500 8 0l.3 2c-3 1.300-5.500 1.300-8.600 0z" fill="#e02828"/><ellipse cx="6.500" cy="3.500" rx="1" ry="1.400" fill="#fff"/><ellipse cx="9.500" cy="3.500" rx="1" ry="1.400" fill="#fff"/><path d="M2 15.500c1-2 4-2 5 0zM9 15.500c1-2 4-2 5 0zM6 5.500h4L8 6.500z" fill="#f0a020"/></svg></button>
    <button aria-label="微信"><svg width="18" height="16"><ellipse cx="7" cy="6" rx="6.500" ry="5.500" fill="#58b838"/><ellipse cx="12" cy="10" rx="5" ry="4.500" fill="#d8f0d0"/><path d="M3 14l1-4 2 2zM14 12l2 3-4-1z" fill="#a8d898"/><circle cx="5" cy="4.500" r=".8"/><circle cx="9" cy="4.500" r=".8"/></svg></button>
    <button aria-label="应用"><svg width="16" height="16"><rect width="16" height="16" fill="#b8208c"/><path d="M0 12C5 9 9 10 16 16M1 9c5-2 9 0 15 5M0 6c6 0 9 3 16 6M4 2c4 2 6 5 12 8M9 1c1 3 4 6 7 7M0 15c5-3 9-3 14 1" fill="none" stroke="#f0d8ea" stroke-width="1.100"/></svg></button>
    <button aria-label="查找"><svg width="16" height="16"><circle cx="10" cy="6" r="4.500" fill="none" stroke="#f08020" stroke-width="2.800"/><path d="M7 9.500L1.500 15" stroke="#f08020" stroke-width="3"/></svg></button>
    <button aria-label="卫士"><svg width="16" height="16"><rect x="1" y="1" width="14" height="14" rx="3" fill="#1878e0"/><path d="M11 4c-4-2-8 1-7 5 1 4 6 5 9 2-2 .5-4-.5-4-2 0-2 3-2 4-1 0-2-1-3-2-4z" fill="#fff"/></svg></button>
    <button aria-label="音量"><svg width="16" height="14"><path d="M.7 5h2.500L6.500 1.500v11L3.200 9H.7z" fill="none" stroke="#eee"/><path d="M8.500 5c1 1.500 1 2.500 0 4M10.800 3.500c2 2.500 2 4.500 0 7M13 2c2.500 3 2.500 7 0 10" fill="none" stroke="#eee"/></svg></button>
    <span class="ime">ENG</span>
    <time>15:14</time>
    <button class="notice" aria-label="通知"><svg width="16" height="16"><path d="M0 0h16v12H7l-3 3v-3H0z" fill="#fff"/><path d="M2.500 3.500h11M2.500 6.200h11M2.500 9h6" stroke="#1a2740" stroke-width="1.200"/><path d="M12 14V9c2 0 3 1 2.500 3" fill="none" stroke="#1a2740"/></svg></button>
  </div>
</footer>
</body>
</html>
```
FILE: styles.css
```css
* { box-sizing: border-box; }
html, body { height: 100%; }
body {
  margin: 0;
  display: flex;
  flex-direction: column;
  height: 100vh;
  overflow: hidden;
  background: #535353;
  color: #e4e4e4;
  font: 12px/16px "Noto Sans CJK SC", "Noto Sans", sans-serif;
}
button, input {
  font: inherit;
  color: inherit;
  background: none;
  border: 0;
  padding: 0;
  margin: 0;
}
svg { display: block; flex: none; }
.defs { width: 0; height: 0; position: absolute; }
i { display: block; flex: none; font-style: normal; }
.mono { font-family: "DejaVu Sans Mono", "Noto Sans CJK SC", monospace; white-space: nowrap; }
.vr { width: 1px; height: 22px; background: #464646; }

/* window tabs */
.windowtabs { flex: none; display: flex; height: 33px; background: linear-gradient(90deg, #bababa, #adadad); }
.wtab { display: flex; align-items: center; gap: 4px; font-family: "Open Sans", "Noto Sans CJK SC", sans-serif; font-size: 11px; white-space: nowrap; }
.wtab-on { width: 169px; padding: 0 8px 2px 4px; background: #505050; color: #fff; }
.wtab-on .x { margin-left: auto; }
.wtab-off { width: 171px; height: 25px; margin-top: 4px; padding-left: 5px; border-right: 1px solid #777; color: #303030; }
.wtab-off svg { color: #111; }
.dots { width: 30px; padding-left: 12px; }

/* menu bar */
.menubar { flex: none; display: flex; align-items: center; gap: 14px; height: 30px; padding: 0 4px 2px 10px; background: #515151; color: #eee; }
.menus { display: flex; gap: 15px; padding-left: 3px; margin-right: -4px; }
.menus button { white-space: nowrap; }
.layoutbtn { display: flex; align-items: center; gap: 8px; }
.menu-right { margin-left: auto; display: flex; align-items: center; gap: 10px; height: 100%; }
.user { display: flex; align-items: center; gap: 10px; font: 13px/16px "Noto Sans", sans-serif; }
.search { display: flex; align-items: center; gap: 5px; width: 129px; height: 20px; padding-left: 4px; background: #434343; border: 1px solid #606060; }
.search input { width: 98px; font: 10px/14px "DejaVu Sans Mono", "Noto Sans CJK SC", monospace; }
.search input::placeholder { color: #8c8c8c; opacity: 1; }
.wincontrols { display: flex; align-self: flex-start; border: 1px solid #626262; border-top: 0; }
.wincontrols button { width: 27px; height: 18px; display: grid; place-items: center; border-right: 1px solid #5e5e5e; }
.wincontrols button:last-child { border-right: 0; }

/* control bar */
.control { flex: none; display: flex; align-items: center; gap: 8px; height: 35px; padding: 0 17px 1px 4px; border-top: 1px solid #3b3b3b; border-bottom: 1px solid #3b3b3b; background: #525252; }
.vgrip { width: 3px; height: 20px; background: repeating-linear-gradient(#3c3c3c 0 1px, transparent 1px 2px); }
.kind { width: 86px; color: #ccc; }
.grp { display: flex; align-items: center; gap: 7px; }
.grp + .grp { margin-left: 6px; }
.q { display: flex; height: 20px; }
.q b { width: 19px; height: 20px; border: 2px solid #e0e0e0; font: 13px/16px "Noto Sans", sans-serif; text-align: center; color: #ddd; }
.drop { display: grid; place-items: center; width: 18px; height: 100%; border: 1px solid #5f5f5f; border-left: 1px solid #484848; background: #4a4a4a; color: #eee; }
.dim { color: #686868; border: 0; background: none; }
.dotted { height: 17px; margin-right: -4px; border-bottom: 1px dotted #b0b0b0; color: #ddd; white-space: nowrap; }
.control .dotted { max-width: 60px; }
.control label.mono { width: 13px; margin-right: -3px; font-weight: bold; font-size: 10px; }
.plain { width: 34px; color: #bbb; white-space: nowrap; }
.combo { display: flex; height: 20px; }
.combo input { height: 20px; padding: 0 0 2px 3px; background: #434343; border: 1px solid #5f5f5f; color: #fff; font: 10px/14px "DejaVu Sans Mono", monospace; }
.stepper { display: grid; place-items: center; width: 18px; height: 20px; background: #4a4a4a; border: 1px solid #5c5c5c; border-right: 0; color: #ddd; }
.w43 { width: 43px; }
.w48 { width: 48px; }
.w57 { width: 57px; }
.greybox { width: 90px; height: 20px; background: #808080; }
.basic > span:first-child { display: flex; align-items: center; justify-content: space-between; width: 86px; height: 20px; padding: 0 5px; background: #e2e2e2; color: #222; }
.style-sw { width: 20px; height: 20px; background: #e4e4e4; }
.ic { display: grid; place-items: center; }
.wide { width: 22px; }
.aligns { gap: 9px; margin-left: 6px; }
.tiphost { position: relative; }
.ibeam { position: absolute; left: 60px; top: 1px; }
.tip { position: absolute; left: 64px; top: 30px; z-index: 5; padding: 2px 6px; background: #fff; color: #505050; white-space: nowrap; box-shadow: 3px 3px 2px #0008; }
.link { display: grid; place-items: center; width: 22px; height: 22px; background: #2e2e2e; border-radius: 2px; }
.icd { display: flex; align-items: center; gap: 4px; margin-left: 4px; color: #e0e0e0; }
.control-right { margin-left: auto; display: flex; align-items: center; gap: 12px; }
.control-right .dimchev { gap: 6px; margin-left: 0; color: #777; }
.control-right .ic:last-child { margin-left: 4px; }

/* work area */
.work { flex: 1; display: flex; min-height: 0; }
.tools { flex: none; width: 42px; background: #525252; border-left: 1px solid #3c3c3c; border-right: 2px solid #3a3a3a; }
.collapse { display: flex; align-items: center; width: 100%; height: 12px; padding-left: 5px; background: #434343; }
.grip { width: 18px; height: 4px; margin: 3px auto 12px; background: repeating-linear-gradient(90deg, #3a3a3a 0 1px, transparent 1px 2px); }
.toollist { display: flex; flex-direction: column; }
.toollist button { position: relative; height: 24px; padding-left: 7px; }
.toollist .on { margin: 1px 5px; height: 22px; padding-left: 2px; background: #303030; border-radius: 2px; }
.on svg { margin: -1px 0; }
.toollist .f::after { content: ""; position: absolute; left: 29px; top: 18px; border: 2px solid; border-color: transparent #ccc #ccc transparent; }
.block { display: block; padding-left: 7px; }
.swap { padding: 1px 0 0 3px; }
.fillstroke { position: relative; padding: 0 0 0 4px; }
.fillstroke b { position: absolute; left: 11px; top: 2px; font: 12px/16px "Noto Sans", sans-serif; color: #ccc; }
.modes { padding: 4px 0 2px 5px; }
.more { padding-top: 8px; }

.doc { flex: 1; min-width: 0; display: flex; flex-direction: column; }
.doctabs { flex: none; display: flex; height: 29px; background: #434343; border-bottom: 1px solid #393939; }
.dtab { display: flex; align-items: center; justify-content: space-between; width: 255px; padding: 0 7px 0 9px; font-size: 13px; color: #a8a8a8; background: #494949; white-space: nowrap; border-right: 1px solid #3c3c3c; }
.dtab-on { background: #535353; color: #eee; }
.stage { flex: 1; display: flex; padding-left: 92px; background: #5e5e5e; min-height: 0; }
.artboard { flex: 1; min-width: 0; background: #fdfdfd; border-left: 1px solid #000; overflow: hidden; }
.art { width: 100%; height: 100%; }
.vscroll { flex: none; width: 16px; background: #484848; display: flex; flex-direction: column; align-items: center; padding-top: 4px; }
.thumb { width: 14px; height: 26px; margin-top: 425px; background: #666; border-radius: 7px; }

/* right side */
.right { flex: none; width: 294px; display: flex; flex-direction: column; border-left: 3px solid #3c3c3c; background: #525252; }
.righthead { flex: none; height: 11px; display: flex; justify-content: space-between; align-items: center; padding: 0 7px 0 24px; background: #434343; border-bottom: 1px solid #3a3a3a; }
.righthead button { display: block; }
.rightbody { flex: 1; display: flex; min-height: 0; }
.dock { flex: none; width: 40px; border-right: 3px solid #3c3c3c; }
.dockgrp { padding: 4px 0; border-bottom: 1px solid #3a3a3a; }
.dockgrp .grip { margin: 0 auto 2px; }
.dockgrp button { display: grid; place-items: center; width: 100%; height: 28px; }
.panels { flex: 1; min-width: 0; display: flex; flex-direction: column; }
.panel { border-bottom: 2px solid #3a3a3a; padding-bottom: 1px; }
.last { flex: 1; display: flex; flex-direction: column; border: 0; padding: 0; }
.ptabs { display: flex; height: 27px; background: #434343; border-bottom: 1px solid #3c3c3c; }
.ptab { display: flex; align-items: center; gap: 5px; padding: 0 10px; color: #a8a8a8; border-right: 1px solid #3a3a3a; }
.ptab.on { background: #535353; color: #f0f0f0; margin-bottom: -1px; }
.multi .ptab { padding: 0 9px; }
.multi .ptab.on { padding: 0 8px 0 5px; }
.pmenu { margin-left: auto; padding-right: 6px; color: #bbb; }
.pbox { height: 180px; margin: 6px 5px 0; border: 1px solid #606060; }
.pfoot { display: flex; align-items: center; gap: 12px; height: 20px; padding: 0 27px 0 5px; color: #c4c4c4; }
.icons { padding-left: 10px; }
.sp { flex: 1; }
.off { color: #747474; }
.brushes { display: flex; height: 181px; border-bottom: 0; border-left-color: #535353; }
.brushlist { width: 224px; overflow: hidden; display: flex; flex-direction: column; }
.cells { display: flex; flex-wrap: wrap; gap: 1px; padding-bottom: 1px; }
.cells i, .brow { background: #e2e2e2; }
.brow { flex: none; display: flex; align-items: center; height: 32px; margin-bottom: 1px; color: #333; }
.basicrow { padding-left: 5px; gap: 5px; }
.sizerow { padding-left: 8px; gap: 8px; font: 10px/16px "DejaVu Sans Mono", monospace; }
.sizerow span { width: 44px; }
.cut { height: 14px; margin-bottom: 0; }
.pscroll { flex: 1; margin-left: 3px; display: flex; flex-direction: column; align-items: center; justify-content: space-between; padding: 1px 0 3px; background: #4b4b4b; color: #888; }
.pscroll i { width: 10px; flex: 1; margin: 3px 0 36px; border-radius: 5px; background: #606060; }
.layer { display: flex; align-items: center; height: 21px; background: #50647a; gap: 5px; padding-left: 3px; color: #d4dbe2; }
.leye { color: #b4bfca; }
.lcolor { width: 3px; height: 18px; margin-left: 23px; background: #4f7ee8; }
.layer .lcolor + svg { margin: 0 6px 0 2px; }
.ltarget { margin-left: auto; }
.colorbody { padding: 9px 17px 6px 5px; }
.spectrum {
  height: 168px;
  margin-top: 9px;
  border: 1px solid #2a2a2a;
  background:
    linear-gradient(#fff 0, #fffd 6%, #fff8 25%, #fff3 40%, #fff0 50%, #0000 54%, #0003 65%, #0009 80%, #000d 92%, #000 100%),
    linear-gradient(90deg, #dc1018 0, #f09018 10%, #f2ea28 16%, #98c422 22%, #5cb428 34%, #5cb878 44%, #40b0e8 54%, #2c60b0 60%, #203a94 66%, #2c2888 71%, #6c2c90 79%, #982888 85%, #e01080 92%, #d40818 100%);
}
.appear { list-style: none; margin: 0; padding: 0; }
.appear li { display: flex; align-items: center; height: 25px; border-bottom: 1px solid #606060; color: #ddd; }
.acol { flex: none; width: 50px; height: 24px; padding: 2px; }
.asw { width: 20px; height: 20px; background: #fff; border: 1px solid #222; }
.aeye { width: 25px; margin-right: 25px; border-right: 1px solid #3a3a3a; padding: 8px 5px; color: #777; }
.appear .dotted { margin-right: 0; text-decoration: none; height: 19px; line-height: 18px; font-weight: 500; }
.fx em { font: italic 14px/16px "Open Sans", sans-serif; color: #ccc; }

/* taskbar */
.taskbar { flex: none; display: flex; height: 30px; background: linear-gradient(90deg, #20373f, #20373f 40%, #182742 85%); color: #eee; }
.start { display: grid; place-items: center; width: 36px; }
.app { display: grid; place-items: center; width: 28px; margin-left: 7px; border-bottom: 2px solid #76b9ed; }
.app + .app { margin-left: 9px; }
.obsapp { color: #aaa; }
.app + .cur { width: 36px; margin-left: 5px; background: #4d606a; }
.tray { margin-left: auto; display: flex; align-items: center; gap: 8px; padding-right: 4px; font: 13px/20px "Open Sans", sans-serif; }
.tray button { display: grid; place-items: center; width: 16px; }
.tray time { margin-left: 4px; }
.tray .notice { margin-left: 10px; width: 37px; height: 30px; justify-content: start; border-right: 1px solid #8090a0; }
```
